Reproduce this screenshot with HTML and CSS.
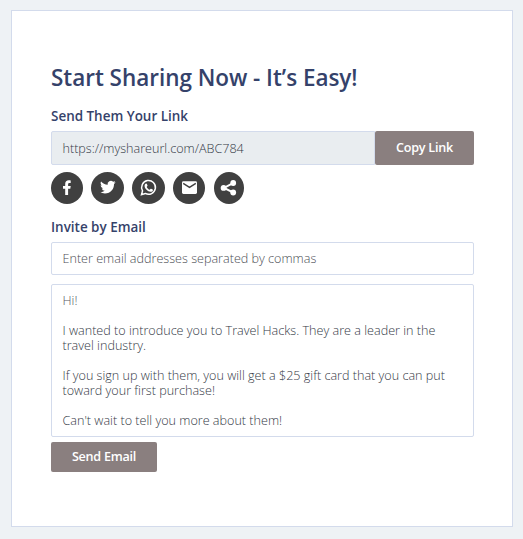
FILE: index.html
```html
<!DOCTYPE html>
<html lang="en">
<head>
<meta charset="utf-8">
<title>Share</title>
<link rel="stylesheet" href="styles.css">
</head>
<body>
<main class="card">
  <h1 class="title">Start Sharing Now - It’s Easy!</h1>
  <h2 class="label">Send Them Your Link</h2>
  <div class="link-row">
    <div class="link-url">https://myshareurl.com/ABC784</div>
    <button class="btn btn-copy">Copy Link</button>
  </div>
  <div class="socials">
    <a class="social"><svg viewBox="0 0 32 32"><path d="M14.2 23v-6.2H12v-2.9h2.2v-1.8c0-2.6 1.4-3.8 3.5-3.8.9 0 1.7.1 2 .1v2.7h-1.2c-1.1 0-1.4.6-1.4 1.4v1.4h2.6l-.4 2.9h-2.2V23z"/></svg></a>
    <a class="social wide"><svg viewBox="0 0 33 32"><g transform="translate(9 7.4) scale(.65)"><path d="M23.95 4.57a10 10 0 0 1-2.82.77 4.96 4.96 0 0 0 2.16-2.72c-.95.55-2 .95-3.13 1.18a4.92 4.92 0 0 0-8.38 4.48C7.69 8.1 4.07 6.13 1.64 3.16a4.82 4.82 0 0 0-.67 2.48c0 1.71.87 3.21 2.19 4.1a4.9 4.9 0 0 1-2.23-.62v.06a4.92 4.92 0 0 0 3.95 4.83 5 5 0 0 1-2.21.08 4.94 4.94 0 0 0 4.6 3.42A9.87 9.87 0 0 1 0 19.54a13.99 13.99 0 0 0 7.55 2.21c9.05 0 14-7.5 14-13.98 0-.21 0-.42-.02-.63a9.94 9.94 0 0 0 2.42-2.57z"/></g></svg></a>
    <a class="social wide"><svg viewBox="0 0 33 32"><path class="line" d="M9.5 22.6l1.05-3.8a6.9 6.9 0 1 1 2.7 2.65z"/><path d="M13.9 11.6c.5-.2.8 0 1 .4l.6 1.5c.1.3 0 .5-.8 1.4.7 1.4 1.7 2.3 3.1 2.9.8-.9.9-1.2 1.3-1l1.5.7c.4.2.5.4.3 1-.3.9-1.4 1.4-2.3 1.3-3.1-.5-5.6-3-6-5.6-.1-1.2.4-2.2 1.3-2.6z"/></svg></a>
    <a class="social"><svg viewBox="0 0 32 32"><rect x="9" y="9.2" width="15" height="12.8" rx="1.4"/><path class="fold" d="M10.2 11.3l6.3 4 6.3-4"/></svg></a>
    <a class="social narrow"><svg viewBox="0 0 30 32"><path class="link" d="M19 11.2l-9 4.7 9 4.5"/><circle cx="19.2" cy="11" r="2.9"/><circle cx="9.6" cy="15.9" r="2.9"/><circle cx="19.2" cy="20.5" r="2.9"/></svg></a>
  </div>
  <h2 class="label invite">Invite by Email</h2>
  <div class="field">Enter email addresses separated by commas</div>
  <div class="message"><span class="greeting">Hi!</span><br><br>I wanted to introduce you to Travel Hacks. They are a leader in the<br>travel industry.<br><br>If you sign up with them, you will get a $25 gift card that you can put<br>toward your first purchase!<br><br>Can't wait to tell you more about them!</div>
  <button class="btn btn-send">Send Email</button>
</main>
</body>
</html>
```
FILE: styles.css
```css
* { box-sizing: border-box; }
body {
  margin: 0;
  padding: 10px 10px 12px 11px;
  background: #eef2f5;
  font-family: "Open Sans", sans-serif;
}
.card {
  width: 502px;
  height: 517px;
  padding: 50px 38px 0 39px;
  background: #fff;
  border: 1px solid #d3dbec;
}
.title {
  margin: 0;
  color: #35426a;
  font-size: 22.5px;
  font-weight: 600;
  line-height: 34px;
  letter-spacing: -.03px;
  white-space: nowrap;
}
.label {
  margin: 11px 0 0;
  color: #35426a;
  font-size: 13.45px;
  font-weight: 600;
  line-height: 20px;
  white-space: nowrap;
}
.link-row { display: flex; margin-top: 5px; height: 34px; }
.link-url {
  width: 324px;
  padding-left: 10.5px;
  border: 1px solid #d3dbec;
  border-radius: 2px 0 0 2px;
  background: #e9edf0;
  color: #343946;
  font-size: 12.6px;
  font-weight: 300;
  line-height: 33px;
}
.btn {
  display: block;
  padding: 0;
  border: 0;
  border-radius: 2px;
  background: #8a7f7f;
  color: #fff;
  font: 600 12.6px "Open Sans", sans-serif;
  letter-spacing: -.25px;
  white-space: nowrap;
}
.btn-copy { width: 99px; padding-bottom: 2px; }
.socials { display: flex; gap: 8px; margin-top: 7px; height: 32px; }
.social { width: 32px; height: 32px; border-radius: 50%; background: #404040; }
.social.wide { width: 33px; }
.social.narrow { width: 30px; margin-left: 1px; }
.social svg { display: block; width: 100%; height: 100%; fill: #fff; }
.social .line { fill: none; stroke: #fff; stroke-width: 1.5; }
.social .fold { fill: none; stroke: #404040; stroke-width: 1.4; }
.social .link { fill: none; stroke: #fff; stroke-width: 2; }
.invite { margin-top: 13px; }
.field {
  height: 33px;
  margin-top: 5px;
  padding-left: 10.5px;
  border: 1px solid #d3dbec;
  border-radius: 2px;
  color: #4c4e55;
  font-size: 12.6px;
  font-weight: 300;
  line-height: 31px;
}
.message {
  height: 153px;
  margin-top: 9px;
  padding: 8px 0 0 10.5px;
  border: 1px solid #d3dbec;
  border-radius: 2px;
  color: #343946;
  font-size: 12.6px;
  font-weight: 300;
  line-height: 15px;
  white-space: nowrap;
}
.greeting { color: #55585f; }
.btn-send { width: 106px; height: 30px; margin-top: 5px; padding-bottom: 1px; }
```
